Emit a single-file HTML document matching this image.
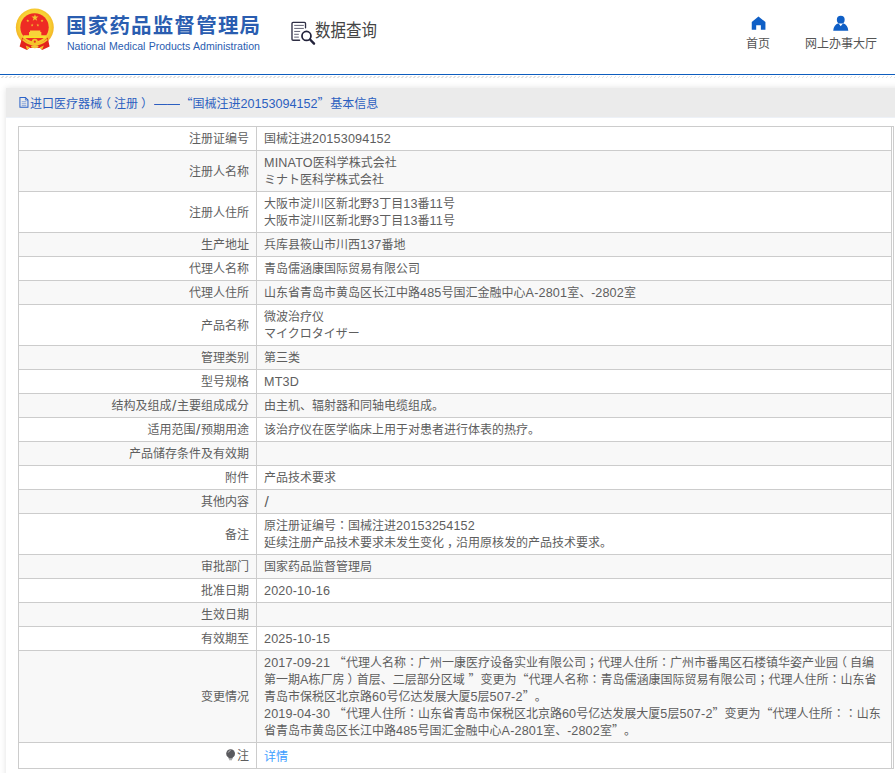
<!DOCTYPE html>
<html>
<head>
<meta charset="utf-8">
<title>国家药品监督管理局 数据查询</title>
<style>
html,body{margin:0;padding:0;}
body{width:895px;height:773px;overflow:hidden;background:#fff;position:relative;
  font-family:"Liberation Sans","Noto Sans CJK SC",sans-serif;font-size:12px;color:#5e5e5e;text-spacing-trim:space-all;word-spacing:.4px;}
#hdr{position:absolute;left:0;top:0;width:895px;height:74px;background:#fff;border-bottom:1px solid #0e5dbe;}
#hatch{position:absolute;left:0;top:76px;width:895px;height:2px;background:repeating-linear-gradient(135deg,#fff 0,#fff 1.9px,#e2e2e2 1.9px,#e2e2e2 2.83px);}
#title1{position:absolute;left:66px;top:10.5px;font-size:20.5px;letter-spacing:1.2px;font-weight:bold;color:#2a5db0;white-space:nowrap;line-height:30px;}
#title2{position:absolute;left:67px;top:39px;font-size:10.55px;color:#2a5db0;white-space:nowrap;line-height:14px;}
#sj{position:absolute;left:315px;top:19.4px;font-size:18.2px;color:#444;white-space:nowrap;line-height:24px;transform:scaleX(.85);transform-origin:0 0;}
.nav{position:absolute;top:35.5px;font-size:12px;color:#555;white-space:nowrap;line-height:16px;}
.ico{position:absolute;display:block;}
#panel{position:absolute;left:6px;top:88px;width:920px;height:700px;background:#fff;box-shadow:0 0 6px rgba(0,0,0,.12);}
#ptitle{position:absolute;left:0;top:0;width:100%;height:29px;border-bottom:1px solid #edf1f7;background:#ebebeb;color:#2b5fc0;line-height:29px;white-space:nowrap;}
#ptitle .t{position:absolute;left:24px;top:2px;}
table{position:absolute;left:18px;top:126px;width:876px;border-collapse:collapse;table-layout:fixed;border:1px solid #ccc;}
td{border:1px solid #ccc;padding:4px 7px 2px 7px;line-height:17px;height:17px;vertical-align:middle;white-space:nowrap;overflow:hidden;}
td.k{text-align:right;width:223px;}
td.v{text-align:left;}
td.x{width:1px;padding:0;border-top:none;border-bottom:none;background:#fff !important;}
tr:nth-child(even) td{background:#f8f8f8;}
tr:last-child td{padding-top:6px;padding-bottom:2px;}
tr:last-child td.k{position:relative;padding-top:5px;padding-bottom:3px;}
a{color:#409eff;text-decoration:none;}
.l,.q,.c,.p1,.p2,.s{line-height:0;}
.l{font-size:12.6px;letter-spacing:.17px;}
.q{font-family:"Noto Sans CJK SC",sans-serif;}
.c{font-family:"Noto Sans CJK JP",sans-serif;}
.p1{position:relative;left:-3px;}
.p2{position:relative;left:3px;}
.s{font-size:15.5px;margin:0 .6px;position:relative;top:1px;}
</style>
</head>
<body>
<div id="hdr">
  <svg class="ico" style="left:8px;top:4px" width="60" height="56" viewBox="0 0 828 773">
<defs><radialGradient id="gd" cx="50%" cy="45%" r="55%"><stop offset="0.72" stop-color="#f7d236"/><stop offset="0.88" stop-color="#f5bd28"/><stop offset="1" stop-color="#f2b33a"/></radialGradient></defs>
<circle cx="370" cy="325" r="262" fill="url(#gd)"/>
<circle cx="366" cy="322" r="196" fill="#ee2b24"/>
<path d="M160 588 L196 462 Q370 655 548 462 L574 588 L470 634 L445 608 L295 608 L262 634 Z" fill="#e3241d"/>
<path d="M215 470 H525 V430 H460 V388 H446 V365 H304 V388 H290 V430 H215 Z" fill="#f8d43a"/>
<rect x="215" y="448" width="310" height="22" fill="#f6e326"/>
<path d="M205 478 Q370 615 540 478 L548 500 Q370 650 196 500 Z" fill="#f5c52c"/>
<circle cx="370" cy="520" r="42" fill="#f4c42c"/><circle cx="370" cy="520" r="15" fill="#e3341d"/>
<path d="M245 572 L305 600 L262 632 Z M495 572 L435 600 L470 632 Z" fill="#f5c52c"/>
<ellipse cx="370" cy="588" rx="52" ry="22" fill="#f3c33a"/>
<g fill="#f2c62f">
<path d="M372 140 L384 174 L420 174 L391 195 L402 230 L372 209 L342 230 L353 195 L324 174 L360 174 Z"/>
<path d="M273 210 L278 225 L294 225 L281 234 L286 250 L273 240 L260 250 L265 234 L252 225 L268 225 Z"/>
<path d="M470 210 L475 225 L491 225 L478 234 L483 250 L470 240 L457 250 L462 234 L449 225 L465 225 Z"/>
<path d="M333 270 L338 285 L354 285 L341 294 L346 310 L333 300 L320 310 L325 294 L312 285 L328 285 Z"/>
<path d="M412 270 L417 285 L433 285 L420 294 L425 310 L412 300 L399 310 L404 294 L391 285 L407 285 Z"/>
</g>
</svg>
  <div id="title1">国家药品监督管理局</div>
  <div id="title2">National Medical Products Administration</div>
  <svg class="ico" style="left:284px;top:12px" width="60" height="40" viewBox="0 0 895 597">
<g fill="none" stroke="#2e2e44" stroke-linecap="round">
<path d="M321 235 V170 Q321 154 305 154 H135 Q119 154 119 170 V405 Q119 421 135 421 H232" stroke-width="20"/>
<path d="M158 200 H290 M158 245 H290 M158 290 H235 M158 333 H215 M158 375 H215" stroke-width="13" stroke="#4a4a60"/>
<circle cx="335" cy="357" r="67" stroke-width="26" stroke="#22223a"/>
<path d="M392 414 L448 473" stroke-width="36" stroke="#22223a"/>
</g>
</svg>
  <div id="sj">数据查询</div>
  <svg class="ico" style="left:734.6px;top:8px" width="60" height="48" viewBox="0 0 895 716">
<path d="M350 128 L454 210 V326 H386 V256 H316 V326 H250 V210 Z" fill="#0f5fc6"/>
</svg>
  <div class="nav" style="left:746px">首页</div>
  <svg class="ico" style="left:795.2px;top:8px" width="90" height="48" viewBox="0 0 895 477">
<circle cx="455" cy="116" r="39" fill="#0f5fc6"/>
<path d="M380 226 Q384 168 432 152 L455 182 L478 152 Q526 168 530 226 Z" fill="#0f5fc6"/>
</svg>
  <div class="nav" style="left:805px">网上办事大厅</div>
</div>
<div id="hatch"></div>
<div id="panel">
  <div id="ptitle"><svg class="ico" style="left:6px;top:2px" width="60" height="26" viewBox="0 0 895 388">
<g fill="none" stroke="#2a62c8" stroke-width="15">
<path d="M118 112 H200 L238 150 V258 H118 Z"/>
<path d="M200 112 V150 H238" stroke-width="11"/>
<path d="M145 175 H212 M145 205 H212 M145 233 H212" stroke-width="10" stroke="#5a84d4"/>
</g>
</svg><span class="t">进口医疗器械<span class="p1">（</span>注册<span class="p2">）</span> <span style="display:inline-block;transform:scaleX(1.08);transform-origin:0 50%;margin-right:2.2px">——</span> <span class="q" style="margin-left:-3.2px">“</span>国械注进<span class="l" style="letter-spacing:0">20153094152</span><span class="q" style="margin-right:-3.2px">”</span> 基本信息</span></div>
</div>
<table>
<tr><td class="k">注册证编号</td><td class="v">国械注进<span class="l">20153094152</span></td><td class="x"></td></tr>
<tr><td class="k">注册人名称</td><td class="v"><span class="l">MINATO</span>医科学株式会社<br>ミナト医科学株式会社</td><td class="x"></td></tr>
<tr><td class="k">注册人住所</td><td class="v">大阪市淀川区新北野<span class="l">3</span>丁目<span class="l">13</span>番<span class="l">11</span>号<br>大阪市淀川区新北野<span class="l">3</span>丁目<span class="l">13</span>番<span class="l">11</span>号</td><td class="x"></td></tr>
<tr><td class="k">生产地址</td><td class="v">兵库县筱山市川西<span class="l">137</span>番地</td><td class="x"></td></tr>
<tr><td class="k">代理人名称</td><td class="v">青岛儒涵康国际贸易有限公司</td><td class="x"></td></tr>
<tr><td class="k">代理人住所</td><td class="v">山东省青岛市黄岛区长江中路<span class="l">485</span>号国汇金融中心<span class="l">A-2801</span>室、-<span class="l">2802</span>室</td><td class="x"></td></tr>
<tr><td class="k">产品名称</td><td class="v">微波治疗仪<br>マイクロタイザー</td><td class="x"></td></tr>
<tr><td class="k">管理类别</td><td class="v">第三类</td><td class="x"></td></tr>
<tr><td class="k">型号规格</td><td class="v"><span class="l">MT3D</span></td><td class="x"></td></tr>
<tr><td class="k">结构及组成<span class="s">/</span>主要组成成分</td><td class="v">由主机、辐射器和同轴电缆组成。</td><td class="x"></td></tr>
<tr><td class="k">适用范围<span class="s">/</span>预期用途</td><td class="v">该治疗仪在医学临床上用于对患者进行体表的热疗。</td><td class="x"></td></tr>
<tr><td class="k">产品储存条件及有效期</td><td class="v"></td><td class="x"></td></tr>
<tr><td class="k">附件</td><td class="v">产品技术要求</td><td class="x"></td></tr>
<tr><td class="k">其他内容</td><td class="v"><span class="s">/</span></td><td class="x"></td></tr>
<tr><td class="k">备注</td><td class="v">原注册证编号<span class="c">：</span>国械注进<span class="l">20153254152</span><br>延续注册产品技术要求未发生变化<span class="p2">，</span>沿用原核发的产品技术要求。</td><td class="x"></td></tr>
<tr><td class="k">审批部门</td><td class="v">国家药品监督管理局</td><td class="x"></td></tr>
<tr><td class="k">批准日期</td><td class="v"><span class="l">2020-10-16</span></td><td class="x"></td></tr>
<tr><td class="k">生效日期</td><td class="v"></td><td class="x"></td></tr>
<tr><td class="k">有效期至</td><td class="v"><span class="l">2025-10-15</span></td><td class="x"></td></tr>
<tr><td class="k">变更情况</td><td class="v"><span class="l">2017-09-21</span> <span class="q">“</span>代理人名称<span class="c">：</span>广州一康医疗设备实业有限公司<span class="c">；</span>代理人住所<span class="c">：</span>广州市番禺区石楼镇华姿产业园<span class="p1">（</span>自编<br>第一期<span class="l">A</span>栋厂房<span class="p2">）</span>首层、二层部分区域 <span class="q">”</span>变更为<span class="q">“</span>代理人名称<span class="c">：</span>青岛儒涵康国际贸易有限公司<span class="c">；</span>代理人住所<span class="c">：</span>山东省<br>青岛市保税区北京路<span class="l">60</span>号亿达发展大厦<span class="l">5</span>层<span class="l">507-2</span><span class="q">”</span>。<br><span class="l">2019-04-30</span> <span class="q">“</span>代理人住所<span class="c">：</span>山东省青岛市保税区北京路<span class="l">60</span>号亿达发展大厦<span class="l">5</span>层<span class="l">507-2</span><span class="q">”</span>变更为<span class="q">“</span>代理人住所<span class="c">：</span><span class="c">：</span>山东<br>省青岛市黄岛区长江中路<span class="l">485</span>号国汇金融中心<span class="l">A-2801</span>室、-<span class="l">2802</span>室<span class="q">”</span>。</td><td class="x"></td></tr>
<tr><td class="k"><svg style="position:absolute;left:207px;top:6px" width="10" height="12" viewBox="0 0 10 12">
<circle cx="4.6" cy="4.7" r="4.4" fill="#5a5a5e"/>
<path d="M2.6 8 H6.6 V9.6 H2.6 Z" fill="#5a5a5e"/>
<path d="M3.1 10.3 H6.1 V11.2 H3.1 Z" fill="#888"/>
<path d="M2.2 3.6 Q2.8 1.8 4.6 1.5" stroke="#c8c8cc" stroke-width="0.8" fill="none"/>
</svg>注</td><td class="v"><a>详情</a></td><td class="x"></td></tr>
</table>
</body>
</html>
